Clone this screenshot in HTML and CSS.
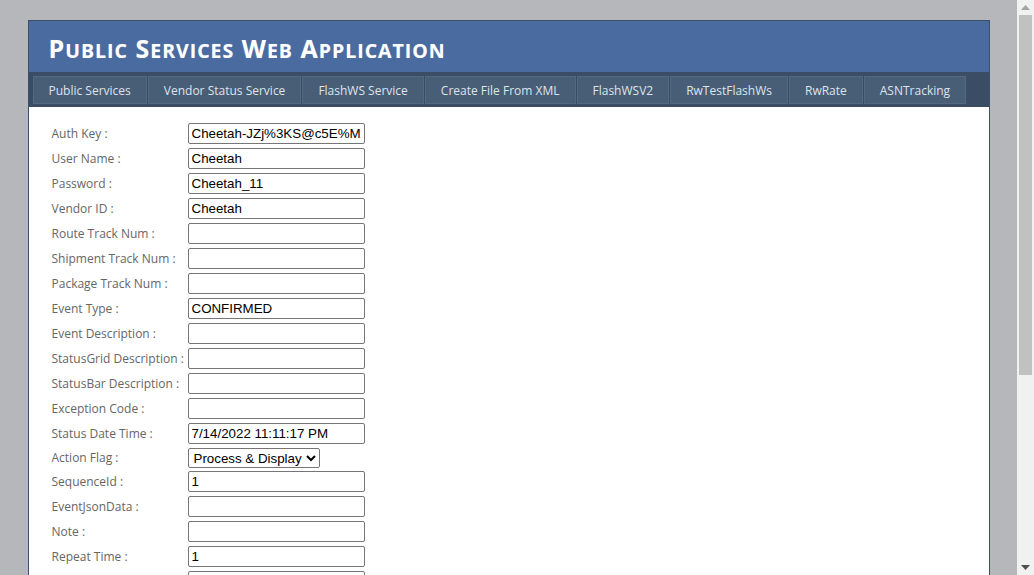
FILE: index.html
```html
<!DOCTYPE html>
<html lang="en">
<head>
<meta charset="utf-8">
<title>Public Services Web Application</title>
<link rel="stylesheet" href="styles.css">
</head>
<body>
<div class="viewport">
  <div class="page">
    <header class="header">
      <h1 class="title">P<span class="sc">ublic</span> S<span class="sc">ervices</span> W<span class="sc">eb</span> A<span class="sc">pplication</span></h1>
    </header>
    <nav class="nav">
      <a class="tab">Public Services</a>
      <a class="tab">Vendor Status Service</a>
      <a class="tab">FlashWS Service</a>
      <a class="tab">Create File From XML</a>
      <a class="tab">FlashWSV2</a>
      <a class="tab">RwTestFlashWs</a>
      <a class="tab">RwRate</a>
      <a class="tab">ASNTracking</a>
    </nav>
    <main class="content">
      <form class="form">
        <label class="lbl">Auth Key :</label><input class="field" type="text" value="Cheetah-JZj%3KS@c5E%MxT">
        <label class="lbl">User Name :</label><input class="field" type="text" value="Cheetah">
        <label class="lbl">Password :</label><input class="field" type="text" value="Cheetah_11">
        <label class="lbl">Vendor ID :</label><input class="field" type="text" value="Cheetah">
        <label class="lbl">Route Track Num :</label><input class="field" type="text" value="">
        <label class="lbl">Shipment Track Num :</label><input class="field" type="text" value="">
        <label class="lbl">Package Track Num :</label><input class="field" type="text" value="">
        <label class="lbl">Event Type :</label><input class="field" type="text" value="CONFIRMED">
        <label class="lbl">Event Description :</label><input class="field" type="text" value="">
        <label class="lbl">StatusGrid Description :</label><input class="field" type="text" value="">
        <label class="lbl">StatusBar Description :</label><input class="field" type="text" value="">
        <label class="lbl">Exception Code :</label><input class="field" type="text" value="">
        <label class="lbl">Status Date Time :</label><input class="field" type="text" value="7/14/2022 11:11:17 PM">
        <label class="lbl">Action Flag :</label>
        <div class="selwrap"><select class="sel"><option>Process &amp; Display</option><option>Process Only</option><option>Display Only</option></select></div>
        <label class="lbl">SequenceId :</label><input class="field" type="text" value="1">
        <label class="lbl">EventJsonData :</label><input class="field" type="text" value="">
        <label class="lbl">Note :</label><input class="field" type="text" value="">
        <label class="lbl">Repeat Time :</label><input class="field" type="text" value="1">
        <label class="lbl">Repeat Interval :</label><input class="field" type="text" value="">
        <label class="lbl">Latitude :</label><input class="field" type="text" value="">
        <label class="lbl">Longitude :</label><input class="field" type="text" value="">
        <label class="lbl">Signed By :</label><input class="field" type="text" value="">
        <span class="lbl"></span><div class="actions"><button class="btn" type="button">Submit</button></div>
      </form>
    </main>
  </div>
</div>
<div class="scrollbar" aria-hidden="true">
  <div class="sb-btn"><svg width="9" height="5" viewBox="0 0 9 5"><polygon points="0,5 9,5 4.5,0" fill="#a3a3a3"/></svg></div>
  <div class="sb-track"><div class="sb-thumb"></div></div>
  <div class="sb-btn"><svg width="9" height="5" viewBox="0 0 9 5"><polygon points="0,0 9,0 4.5,5" fill="#505050"/></svg></div>
</div>
</body>
</html>
```

FILE: styles.css
```css
html, body {
  margin: 0;
  padding: 0;
  height: 100%;
  overflow: hidden;
}
body {
  background: #b6b7bb;
  font-family: "Open Sans", "Noto Sans", sans-serif;
  display: flex;
}
.viewport {
  flex: 1;
  min-width: 0;
  height: 100vh;
  overflow: hidden;
}

/* scrollbar column */
.scrollbar {
  width: 17px;
  flex: none;
  height: 100vh;
  background: #f1f1f1;
  display: flex;
  flex-direction: column;
}
.sb-btn {
  height: 15px;
  flex: none;
  display: flex;
  align-items: center;
  justify-content: center;
}
.sb-track {
  flex: 1;
  padding: 0 2px;
}
.sb-thumb {
  height: 360px;
  background: #c1c1c1;
}

.page {
  width: 960px;
  margin: 20px auto 20px;
  border: 1px solid #3e5069;
  background: #fff;
}
.header {
  background: #4a6b9f;
  height: 51px;
  padding: 0 20px;
  display: flex;
  align-items: center;
}
.title {
  margin: 4px 0 0;
  color: #fff;
  font-family: "Open Sans", sans-serif;
  font-weight: 700;
  font-size: 25px;
  line-height: 1;
  text-transform: uppercase;
  letter-spacing: 1px;
  text-shadow: 0 0 1px rgba(255,255,255,0.3);
}
.title .sc {
  font-size: 19.5px;
}
.nav {
  background: #3b4d64;
  display: flex;
  padding: 4px 4px 3px;
  gap: 1px;
}
.tab {
  display: flex;
  align-items: center;
  height: 25px;
  padding: 1px 15px 0;
  background: #485d76;
  border: 1px solid #53677f;
  color: #dde4ec;
  font-size: 12px;
  white-space: nowrap;
}
.content {
  padding: 16px 23px 50px;
}
.form {
  display: grid;
  grid-template-columns: 136px auto;
  row-gap: 4px;
  justify-content: start;
  align-items: center;
}
.lbl {
  color: #666;
  font-size: 12px;
  line-height: 16px;
  white-space: nowrap;
}
.field {
  box-sizing: border-box;
  width: 177px;
  height: 21px;
  margin: 0;
  padding: 1px 3px;
  border: 1px solid #767676;
  border-radius: 2px;
  font-family: "Liberation Sans", Arial, sans-serif;
  font-size: 13.333px;
  color: #000;
  background: #fff;
}
.selwrap {
  display: flex;
  height: 19px;
  align-items: flex-start;
}
.sel {
  box-sizing: border-box;
  height: 20px;
  margin: 0;
  padding: 0 0 0 1px;
  border: 1px solid #767676;
  border-radius: 2px;
  font-family: "Liberation Sans", Arial, sans-serif;
  font-size: 13.333px;
  color: #000;
  background: #fff;
}
.actions {
  padding-top: 10px;
}
.btn {
  font-family: "Liberation Sans", Arial, sans-serif;
  font-size: 13.333px;
  padding: 2px 10px;
}
```
